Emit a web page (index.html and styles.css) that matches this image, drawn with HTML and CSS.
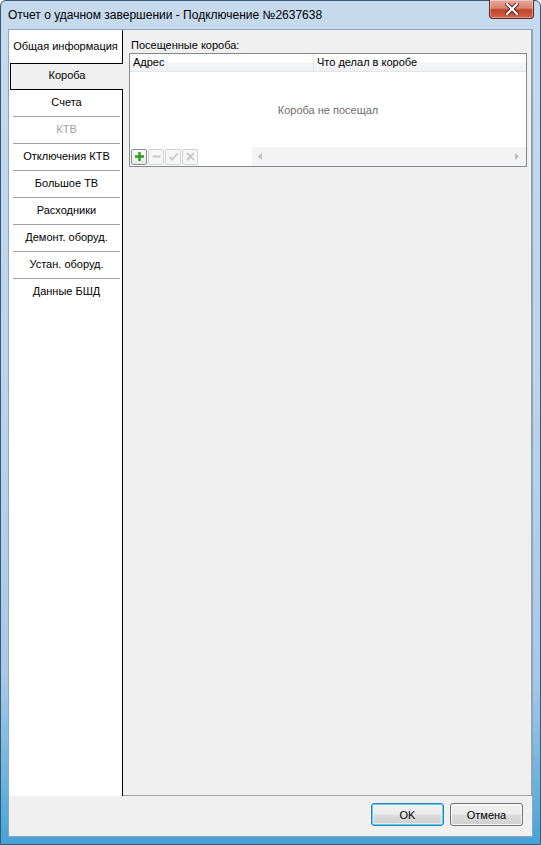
FILE: index.html
```html
<!DOCTYPE html>
<html lang="ru">
<head>
    <meta charset="utf-8">
    <title>Отчет о удачном завершении</title>
    <link rel="stylesheet" href="styles.css">
</head>
<body>
    <div class="window">
        <div class="titlebar">
            <span class="title">Отчет о удачном завершении - Подключение №2637638</span>
            <button class="close-btn" aria-label="Закрыть">
                <svg width="14" height="12" viewBox="0 0 14 12">
                    <path d="M2 1 L12 11 M12 1 L2 11" stroke="#4a1a14" stroke-width="4" stroke-linecap="square"/>
                    <path d="M2 1 L12 11 M12 1 L2 11" stroke="#ffffff" stroke-width="2.2" stroke-linecap="square"/>
                </svg>
            </button>
        </div>

        <div class="client">
            <div class="main">
                <!-- вкладки слева -->
                <ul class="tabs">
                    <li class="tab tab-first">Общая информация</li>
                    <li class="tab tab-active">Короба</li>
                    <li class="tab">Счета</li>
                    <li class="tab tab-disabled">КТВ</li>
                    <li class="tab">Отключения КТВ</li>
                    <li class="tab">Большое ТВ</li>
                    <li class="tab">Расходники</li>
                    <li class="tab">Демонт. оборуд.</li>
                    <li class="tab">Устан. оборуд.</li>
                    <li class="tab tab-last">Данные БШД</li>
                </ul>

                <div class="page">
                    <div class="group-label">Посещенные короба:</div>
                    <div class="grid">
                        <div class="grid-header">
                            <div class="col col-addr">Адрес</div>
                            <div class="col col-what">Что делал в коробе</div>
                        </div>
                        <div class="grid-body">Короба не посещал</div>
                        <div class="grid-footer">
                            <div class="nav">
                                <span class="nav-btn nav-add">
                                    <svg width="11" height="11" viewBox="0 0 11 11"><path d="M5.5 1 V10 M1 5.5 H10" stroke="#2e9a1c" stroke-width="2.4"/></svg>
                                </span>
                                <span class="nav-btn">
                                    <svg width="11" height="11" viewBox="0 0 11 11"><path d="M1.5 5.5 H9.5" stroke="#c8c8c8" stroke-width="2"/></svg>
                                </span>
                                <span class="nav-btn">
                                    <svg width="11" height="11" viewBox="0 0 11 11"><path d="M1.5 6 L4.2 8.5 L9.5 2.5" fill="none" stroke="#c8c8c8" stroke-width="1.8"/></svg>
                                </span>
                                <span class="nav-btn">
                                    <svg width="11" height="11" viewBox="0 0 11 11"><path d="M2 2 L9 9 M9 2 L2 9" stroke="#c8c8c8" stroke-width="1.8"/></svg>
                                </span>
                            </div>
                            <div class="hscroll">
                                <svg width="4" height="7" viewBox="0 0 4 7"><path d="M4 0 V7 L0 3.5 Z" fill="#bdbdbd"/></svg>
                                <svg width="4" height="7" viewBox="0 0 4 7"><path d="M0 0 V7 L4 3.5 Z" fill="#bdbdbd"/></svg>
                            </div>
                        </div>
                    </div>
                </div>
            </div>

            <div class="buttons">
                <button class="btn btn-default">OK</button>
                <button class="btn">Отмена</button>
            </div>
        </div>
    </div>
</body>
</html>
```

FILE: styles.css
```css
html, body {
    margin: 0;
    padding: 0;
    background: #ffffff;
}
body {
    width: 541px;
    height: 845px;
    font-family: "Liberation Sans", "DejaVu Sans", sans-serif;
    font-size: 11px;
    color: #000;
}
.window {
    box-sizing: border-box;
    width: 541px;
    height: 845px;
    border: 1px solid #3a5774;
    border-radius: 6px 6px 0 0;
    padding: 0 7px 7px 7px;
    background: linear-gradient(180deg, #c6daee 0%, #bdd4eb 45%, #a7cae8 80%, #5aaddb 96%, #46a2d6 100%);
    display: flex;
    flex-direction: column;
}
.titlebar {
    height: 28px;
    display: flex;
    align-items: flex-start;
    justify-content: space-between;
}
.title {
    padding-top: 7px;
    font-size: 12px;
    color: #000;
}
.close-btn {
    width: 45px;
    height: 19px;
    margin-top: -1px;
    margin-right: -1px;
    border: 1px solid #5a2a24;
    border-top: none;
    border-radius: 0 0 4px 4px;
    background: linear-gradient(180deg, #e9a99c 0%, #d8826f 45%, #c0442a 55%, #d3624a 100%);
    box-shadow: inset 0 0 0 1px rgba(255,255,255,0.35);
    padding: 0;
    display: flex;
    align-items: center;
    justify-content: center;
}
.client {
    flex: 1;
    display: flex;
    flex-direction: column;
    background: #f0f0f0;
    border: 1px solid #8aa6c2;
}
.main {
    flex: 1;
    display: flex;
}

/* вкладки */
.tabs {
    list-style: none;
    margin: 0;
    padding: 0;
    width: 113px;
    background: #fff;
    border-right: 1px solid #000;
    display: flex;
    flex-direction: column;
}
.tab {
    height: 26px;
    margin: 0 2px 0 4px;
    padding-bottom: 2px;
    box-sizing: content-box;
    height: 24px;
    border-bottom: 1px solid #a0a0a0;
    display: flex;
    align-items: center;
    justify-content: center;
    white-space: nowrap;
}
.tab-first {
    height: 33px;
    margin: 0;
    border-bottom: none;
    padding: 0 0 1px 0;
    box-sizing: border-box;
}
.tab-active {
    height: 27px;
    margin: 0 -1px 0 1px;
    padding: 0 0 3px 0;
    box-sizing: border-box;
    border: 1px solid #000;
    border-right: none;
    background: #f0f0f0;
}
.tab-disabled {
    color: #a0a0a0;
}
.tab-last {
    border-bottom: none;
}

/* содержимое вкладки */
.page {
    flex: 1;
    padding: 9px 4px 0 6px;
    border-bottom: 1px solid #a0a0a0;
    border-right: 1px solid #a0a0a0;
}
.group-label {
    padding-left: 2px;
    height: 14px;
}
.grid {
    border: 1px solid #828790;
    background: #fff;
    display: flex;
    flex-direction: column;
}
.grid-header {
    height: 17px;
    display: flex;
    border-bottom: 1px solid #e3e5e8;
    background: linear-gradient(180deg, #ffffff 0%, #ffffff 45%, #f4f5f7 55%, #f1f2f4 100%);
}
.col {
    padding: 2px 0 0 3px;
    box-sizing: border-box;
}
.col-addr {
    width: 184px;
    border-right: 1px solid #dfe2e6;
}
.grid-body {
    height: 75px;
    display: flex;
    align-items: center;
    justify-content: center;
    color: #6d6d6d;
}
.grid-footer {
    height: 19px;
    display: flex;
    align-items: center;
}
.nav {
    display: flex;
    gap: 1px;
    padding-left: 1px;
    width: 121px;
}
.nav-btn {
    width: 16px;
    height: 16px;
    box-sizing: border-box;
    border: 1px solid #cfd2d5;
    border-radius: 2px;
    background: #f7f7f7;
    display: flex;
    align-items: center;
    justify-content: center;
}
.nav-add {
    border-color: #8a8f93;
    background: linear-gradient(180deg, #fafafa, #e8e8e8);
}
.hscroll {
    flex: 1;
    height: 19px;
    background: #f4f4f4;
    display: flex;
    align-items: center;
    justify-content: space-between;
    padding: 0 7px 0 6px;
}

/* кнопки диалога */
.buttons {
    height: 40px;
    display: flex;
    justify-content: flex-end;
    align-items: flex-start;
    gap: 6px;
    padding: 7px 9px 0 0;
    box-sizing: border-box;
}
.btn {
    width: 73px;
    height: 23px;
    border: 1px solid #707070;
    border-radius: 3px;
    background: linear-gradient(180deg, #f2f2f2 0%, #ebebeb 49%, #dddddd 51%, #cfcfcf 100%);
    box-shadow: inset 0 0 0 1px rgba(255,255,255,0.8);
    font-family: "Liberation Sans", "DejaVu Sans", sans-serif;
    font-size: 11px;
    color: #000;
    padding: 0;
}
.btn-default {
    border-color: #3c7fb1;
    box-shadow: inset 0 0 0 1px #48d2f9, inset 0 0 0 2px rgba(255,255,255,0.5);
}
```
